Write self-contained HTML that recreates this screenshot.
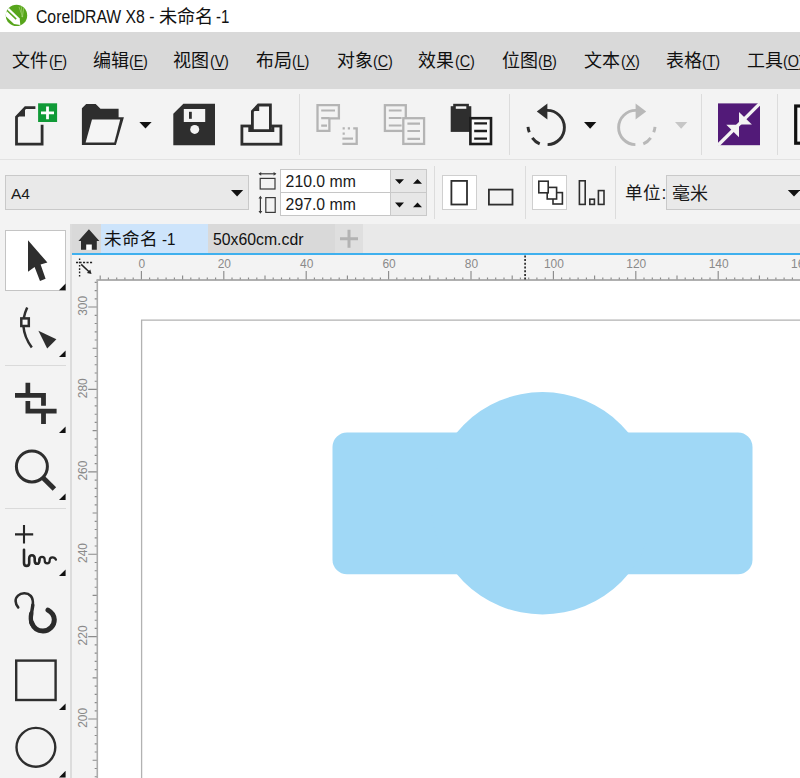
<!DOCTYPE html>
<html lang="zh-CN">
<head>
<meta charset="utf-8">
<title>CorelDRAW X8 - 未命名 -1</title>
<style>
html,body{margin:0;padding:0;width:800px;height:778px;overflow:hidden;background:#fff;}
#app{width:800px;height:778px;overflow:hidden;position:relative;background:#fff;
  font-family:"Liberation Sans",sans-serif;color:#1a1a1a;}
.abs{position:absolute;}
svg{position:absolute;left:0;top:0;overflow:visible;}
/* title bar */
#titlebar{left:0;top:0;width:800px;height:32px;background:#fff;}
#title{left:0;top:4px;width:400px;height:26px;line-height:26px;font-size:17.5px;white-space:nowrap;color:#111;}
#title span{position:absolute;top:0;display:block;transform-origin:0 50%;}
#t1{left:36px;transform:scaleX(.90);}
#t2{left:159.4px;font-size:18.2px;}
#t3{left:216.2px;transform:scaleX(.86);}
/* menu bar */
#menubar{left:0;top:32px;width:800px;height:57px;background:#d9d9d9;}
.mi{position:absolute;top:15px;height:28px;line-height:28px;font-size:18px;white-space:nowrap;color:#111;}
.mi .k{position:absolute;left:36.8px;top:0;display:block;font-size:16.4px;transform:scaleX(.88);transform-origin:0 50%;letter-spacing:-0.2px;}
.mi u{text-decoration:underline;text-underline-offset:1.5px;text-decoration-thickness:1.2px;}
/* standard toolbar */
#toolbar{left:0;top:89px;width:800px;height:70px;background:#f3f3f3;}
.vsep{position:absolute;width:1px;background:#dcdcdc;}
/* property bar */
#propbar{left:0;top:159px;width:800px;height:65px;background:#f3f3f3;box-shadow:inset 0 1px 0 #e2e2e2;}
.combo{position:absolute;box-sizing:border-box;background:#e9e9e9;border:1px solid #c9c9c9;
  font-size:16px;line-height:32px;white-space:nowrap;}
.field{position:absolute;box-sizing:border-box;background:#fff;border:1px solid #c6c6c6;
  font-size:15.8px;white-space:nowrap;}
.spin{position:absolute;box-sizing:border-box;background:#e7e7e7;border:1px solid #c9c9c9;}
.btnon{position:absolute;box-sizing:border-box;background:#fff;border:1px solid #cfcfcf;}
/* doc tabs */
#tabstrip{left:0;top:224px;width:800px;height:31px;background:#e9e9e9;}
#tabline{left:72px;top:253px;width:728px;height:2px;background:#3fb0ee;}
.tab{position:absolute;top:224px;height:29px;line-height:31px;font-size:15.8px;white-space:nowrap;color:#111;}
/* toolbox */
#toolbox{left:0;top:224px;width:72px;height:554px;background:#f3f3f3;border-right:2px solid #dcdcdc;box-sizing:border-box;}
.tsep{position:absolute;left:5px;width:61px;height:1px;background:#dadada;}
/* rulers + canvas */
#hruler{left:72px;top:255px;width:728px;height:25px;background:#f3f3f3;}
#vruler{left:72px;top:255px;width:25px;height:523px;background:#f3f3f3;}
#canvas{left:97px;top:280px;width:703px;height:498px;background:#fff;}
.rl text{font-family:"Liberation Sans",sans-serif;font-size:13px;fill:#8a8a8a;}
</style>
</head>
<body>
<div id="app">

<!-- ===== title bar ===== -->
<div id="titlebar" class="abs"></div>
<svg width="800" height="32" viewBox="0 0 800 32" id="logo">
  <!-- CorelDRAW balloon logo -->
  <defs><clipPath id="lc"><circle cx="16.5" cy="15.4" r="10.7"/></clipPath></defs>
  <circle cx="16.5" cy="15.4" r="10.7" fill="#57a51b"/>
  <g clip-path="url(#lc)">
    <path d="M7.4 6.6L19.7 18.6L20.3 24.9L14 23.9L3 13.6Z" fill="#fff"/>
    <path d="M5.6 9L16.2 19.1" stroke="#57a51b" stroke-width="1.5" fill="none"/>
    <path d="M19 6.8L22.3 16.2M21.2 6L22.4 16M23.8 7.6L22.6 16" stroke="#93c960" stroke-width="0.9" fill="none"/>
    <circle cx="22.3" cy="16.3" r="0.9" fill="#a6d47a"/>
  </g>
</svg>
<div id="title" class="abs"><span id="t1">CorelDRAW X8 -</span><span id="t2">未命名</span><span id="t3">-1</span></div>

<!-- ===== menu bar ===== -->
<div id="menubar" class="abs">
  <div class="mi" style="left:11.8px">文件<span class="k">(<u>F</u>)</span></div>
  <div class="mi" style="left:92.6px">编辑<span class="k">(<u>E</u>)</span></div>
  <div class="mi" style="left:173px">视图<span class="k">(<u>V</u>)</span></div>
  <div class="mi" style="left:255.6px">布局<span class="k">(<u>L</u>)</span></div>
  <div class="mi" style="left:336.6px">对象<span class="k">(<u>C</u>)</span></div>
  <div class="mi" style="left:418px">效果<span class="k">(<u>C</u>)</span></div>
  <div class="mi" style="left:501.6px">位图<span class="k">(<u>B</u>)</span></div>
  <div class="mi" style="left:584px">文本<span class="k">(<u>X</u>)</span></div>
  <div class="mi" style="left:665.6px">表格<span class="k">(<u>T</u>)</span></div>
  <div class="mi" style="left:746.6px">工具<span class="k">(<u>O</u>)</span></div>
</div>

<!-- ===== standard toolbar ===== -->
<div id="toolbar" class="abs">
  <div class="vsep" style="left:299px;top:5px;height:61px"></div>
  <div class="vsep" style="left:509px;top:5px;height:61px"></div>
  <div class="vsep" style="left:701px;top:5px;height:61px"></div>
  <div class="vsep" style="left:777px;top:5px;height:61px"></div>
</div>
<svg width="800" height="778" viewBox="0 0 800 778" id="tbicons">
  <!-- new document -->
  <path d="M35.4 107.6H25.4L16.5 117V144.2H42.1V124.7" fill="none" stroke="#2e2e2e" stroke-width="2.8" stroke-linejoin="miter"/>
  <path d="M17.4 116.4H25V108.6Z" fill="#2e2e2e"/>
  <rect x="38.1" y="103.3" width="19" height="18.7" fill="#109a37"/>
  <path d="M41 112.8H54M47.5 106.4V119.3" stroke="#fff" stroke-width="2.8" fill="none"/>
  <!-- open -->
  <path d="M81.9 108.3L86.2 104H95.7L100.5 108.8H118.6V117.3H123.9L115.9 145H81.9Z" fill="#2e2e2e"/>
  <path d="M92 119.4H120.2L114.3 142.4H85.6Z" fill="#f5f5f5"/>
  <path d="M139.4 122H151.6L145.5 128.5Z" fill="#111"/>
  <!-- save -->
  <path d="M183.4 103.8H215V145.3H173.3V113.8Z" fill="#2e2e2e"/>
  <rect x="183.8" y="109" width="21.4" height="13" fill="#f3f3f3"/>
  <rect x="189" y="111.8" width="2.8" height="7" fill="#2e2e2e"/>
  <circle cx="194.7" cy="129.4" r="4.5" fill="#f3f3f3"/>
  <!-- print -->
  <rect x="241.9" y="126" width="39" height="18.2" fill="#f4f4f4" stroke="#2e2e2e" stroke-width="2.8"/>
  <path d="M249.7 126V130.7H272.9V126" fill="none" stroke="#2e2e2e" stroke-width="2.8"/>
  <path d="M258.4 105H270.4V130.7H252.4V111.2Z" fill="#f6f6f6" stroke="#2e2e2e" stroke-width="2.8"/>
  <path d="M253.2 111H259.2V105.6Z" fill="#2e2e2e"/>
  <!-- cut (disabled) -->
  <g fill="none" stroke="#b4b4b4" stroke-width="2.3">
    <path d="M317.5 105.2H338.9V118.4H329.4V130.9H317.5Z"/>
    <path d="M321.2 110.5H335M321.2 118.2H329.4M321.2 125.6H327" stroke-width="2.2"/>
    <path d="M353.2 128.3H356.7V143.9H342.4"/>
    <path d="M342.4 138.6H353" stroke-width="2.2"/>
  </g>
  <path d="M342.6 127.2H344.8V129.4H342.6ZM347.8 127.2H350V129.4H347.8ZM342.6 132.6H344.8V134.8H342.6Z" fill="#b4b4b4"/>
  <!-- copy (disabled) -->
  <g fill="#f3f3f3" stroke="#b4b4b4" stroke-width="2.3">
    <rect x="384.9" y="105.2" width="20.9" height="25.7"/>
    <path d="M388.8 110.5H401.6M388.8 118H401.6M388.8 125.5H401.6" fill="none" stroke-width="2.2"/>
    <rect x="403.3" y="118.2" width="20.8" height="25.7"/>
    <path d="M407.4 123.6H420M407.4 131H420M407.4 138.8H420" fill="none" stroke-width="2.2"/>
  </g>
  <!-- paste -->
  <rect x="450.7" y="106.2" width="20.6" height="25.7" fill="#2e2e2e"/>
  <rect x="453.2" y="103.8" width="15.7" height="6" fill="#2e2e2e"/>
  <rect x="455.8" y="106.3" width="10.5" height="2.5" fill="#f6f6f6"/>
  <g fill="#f8f8f8" stroke="#1c1c1c" stroke-width="2.6">
    <rect x="470.4" y="118.2" width="20.6" height="25.8"/>
    <path d="M474.2 123.3H487M474.2 131H487M474.2 138.7H487" fill="none" stroke-width="2.3"/>
  </g>
  <!-- undo -->
  <g fill="none" stroke="#2e2e2e" stroke-width="2.9">
    <path d="M547 110.4A17.1 17.1 0 0 1 547.6 144.6"/>
    <path d="M539.7 143.9A18 18 0 0 1 532.3 137.8"/>
    <path d="M529.3 132.3A18.5 18.5 0 0 1 528 126.8"/>
  </g>
  <path d="M536.8 111.5L547.4 103.6V119.4Z" fill="#2e2e2e"/>
  <path d="M584 122H596.3L590.15 128.8Z" fill="#111"/>
  <!-- redo (disabled) -->
  <g fill="none" stroke="#b8b8b8" stroke-width="2.9">
    <path d="M636 110.4A17.1 17.1 0 0 0 635.4 144.6"/>
    <path d="M643.3 143.9A18 18 0 0 0 650.7 137.8"/>
    <path d="M653.7 132.3A18.5 18.5 0 0 0 655 126.8"/>
  </g>
  <path d="M646.2 111.5L635.6 103.6V119.4Z" fill="#b8b8b8"/>
  <path d="M675 122H687.3L681.15 128.8Z" fill="#c6c6c6"/>
  <!-- search content (purple) -->
  <rect x="718" y="103.4" width="42" height="41.8" fill="#521a78"/>
  <path d="M718 145.2L760 103.4" stroke="#f3f3f3" stroke-width="3.4" fill="none"/>
  <path d="M739 111.9V124.6H751.9Z" fill="#f3f3f3"/>
  <path d="M726.3 124.7H739V137.3Z" fill="#f3f3f3"/>
  <!-- clipped next icon -->
  <rect x="795.7" y="106" width="30" height="37.2" fill="#fafafa" stroke="#111" stroke-width="3.2"/>
</svg>

<!-- ===== property bar ===== -->
<div id="propbar" class="abs">
  <div class="combo" style="left:5px;top:16px;width:244px;height:35px;padding-left:5px;font-size:15.5px;line-height:36px">A4</div>
  <div class="field" style="left:280px;top:10px;width:111px;height:24px;line-height:23px;padding-left:4.6px">210.0 mm</div>
  <div class="field" style="left:280px;top:33px;width:111px;height:24px;line-height:23px;padding-left:4.6px">297.0 mm</div>
  <div class="spin" style="left:390px;top:10px;width:37px;height:24px"></div>
  <div class="spin" style="left:390px;top:33px;width:37px;height:24px"></div>
  <div class="vsep" style="left:434px;top:7px;height:53px"></div>
  <div class="btnon" style="left:442px;top:16px;width:35px;height:35px"></div>
  <div class="vsep" style="left:525px;top:7px;height:53px"></div>
  <div class="btnon" style="left:532px;top:16px;width:35px;height:35px"></div>
  <div class="vsep" style="left:615px;top:7px;height:53px"></div>
  <div class="abs" style="left:625.4px;top:16px;height:35px;line-height:37px;font-size:17.6px;white-space:nowrap">单位:</div>
  <div class="combo" style="left:666px;top:16px;width:140px;height:35px;padding-left:5px;font-size:18px;line-height:36px">毫米</div>
</div>
<svg width="800" height="778" viewBox="0 0 800 778" id="pbicons">
  <!-- page size dropdown arrow -->
  <path d="M231 190H243.2L237.1 196.6Z" fill="#111"/>
  <!-- page width / height icons -->
  <g fill="none" stroke="#3a3a3a" stroke-width="1.2">
    <path d="M259.5 173.8H275.5"/>
    <rect x="260.2" y="178.4" width="14.8" height="10.6"/>
    <path d="M260.4 197V212.6"/>
    <rect x="265.8" y="197.6" width="9.4" height="14.8"/>
  </g>
  <path d="M258.4 173.8L261.2 171.9V175.7ZM276.4 173.8L273.6 171.9V175.7ZM260.4 195.8L258.5 198.6H262.3ZM260.4 213.8L258.5 211H262.3Z" fill="#3a3a3a"/>
  <!-- spin arrows -->
  <path d="M395 179.2H404L399.5 184ZM413 183.8H422L417.5 179ZM395 202.6H404L399.5 207.4ZM413 207.2H422L417.5 202.4Z" fill="#111"/>
  <path d="M408.5 170V216" stroke="#dcdcdc" stroke-width="0" fill="none"/>
  <!-- portrait / landscape -->
  <g fill="#fff" stroke="#2e2e2e" stroke-width="1.8">
    <rect x="451.4" y="180.9" width="15.6" height="23.6"/>
    <rect x="488.9" y="189.6" width="23.6" height="15" fill="#f3f3f3"/>
  </g>
  <!-- all pages / current page -->
  <g fill="#fff" stroke="#2e2e2e" stroke-width="1.6">
    <rect x="553" y="192.6" width="9.4" height="11.4"/>
    <rect x="547.2" y="187.4" width="9.4" height="11.6"/>
    <rect x="538.8" y="181.2" width="9.4" height="11.6"/>
  </g>
  <g fill="none" stroke="#2e2e2e" stroke-width="1.6">
    <rect x="579.4" y="180.8" width="5.8" height="23.6"/>
    <rect x="589.8" y="199.2" width="4.6" height="5.2"/>
    <rect x="598.4" y="190.6" width="5.6" height="13.8"/>
  </g>
  <!-- units dropdown arrow -->
  <path d="M787.8 190H800.2L794 196.6Z" fill="#111"/>
</svg>

<!-- ===== document tabs ===== -->
<div id="tabstrip" class="abs"></div>
<div class="tab" style="left:71px;width:30px;background:#d9d9d9"></div>
<div class="tab" style="left:101px;width:107px;background:#cde4fb"><span style="position:absolute;left:3px;font-size:17.6px">未命名</span><span style="position:absolute;left:61.4px;font-size:15.8px;transform:scaleX(.96);transform-origin:0 50%">-1</span></div>
<div class="tab" style="left:208px;width:127px;background:#d9d9d9"><span style="position:absolute;left:5px">50x60cm.cdr</span></div>
<div class="tab" style="left:335px;width:28px;background:#dfdfdf"></div>
<div id="tabline" class="abs"></div>
<svg width="800" height="778" viewBox="0 0 800 778" id="tabicons">
  <!-- welcome screen (home) -->
  <rect x="85.5" y="244" width="7" height="5.8" fill="#fff"/>
  <path d="M88.9 229.2L99.4 241H96.8V249.8H91.8V244.6H86.2V249.8H81V241H78.4Z" fill="#2e2e2e"/>
  <!-- new document tab (+) -->
  <path d="M340 238.8H358M349 229.8V247.8" stroke="#b3b3b3" stroke-width="3" fill="none"/>
</svg>

<!-- ===== rulers and drawing window ===== -->
<div id="hruler" class="abs"></div>
<div id="vruler" class="abs"></div>
<div id="canvas" class="abs"></div>
<svg width="800" height="778" viewBox="0 0 800 778" id="rulers" class="rl">
  <path d="M97.3 778V280" stroke="#acacac" stroke-width="1.6" fill="none"/>
  <path d="M96.5 280H800" stroke="#b0b0b0" stroke-width="2" fill="none"/>
  <path d="M141.6 778V320.1H800" stroke="#b2b2b2" stroke-width="1.3" fill="none"/>
  <path d="M100.2 279.4v-3.9 M108.4 279.4v-1.9 M116.7 279.4v-1.9 M124.9 279.4v-1.9 M133.2 279.4v-1.9 M141.4 279.4v-8.4 M149.6 279.4v-1.9 M157.9 279.4v-1.9 M166.1 279.4v-1.9 M174.4 279.4v-1.9 M182.6 279.4v-3.9 M190.8 279.4v-1.9 M199.1 279.4v-1.9 M207.3 279.4v-1.9 M215.6 279.4v-1.9 M223.8 279.4v-8.4 M232.0 279.4v-1.9 M240.3 279.4v-1.9 M248.5 279.4v-1.9 M256.8 279.4v-1.9 M265.0 279.4v-3.9 M273.2 279.4v-1.9 M281.5 279.4v-1.9 M289.7 279.4v-1.9 M298.0 279.4v-1.9 M306.2 279.4v-8.4 M314.4 279.4v-1.9 M322.7 279.4v-1.9 M330.9 279.4v-1.9 M339.2 279.4v-1.9 M347.4 279.4v-3.9 M355.6 279.4v-1.9 M363.9 279.4v-1.9 M372.1 279.4v-1.9 M380.4 279.4v-1.9 M388.6 279.4v-8.4 M396.8 279.4v-1.9 M405.1 279.4v-1.9 M413.3 279.4v-1.9 M421.6 279.4v-1.9 M429.8 279.4v-3.9 M438.0 279.4v-1.9 M446.3 279.4v-1.9 M454.5 279.4v-1.9 M462.8 279.4v-1.9 M471.0 279.4v-8.4 M479.2 279.4v-1.9 M487.5 279.4v-1.9 M495.7 279.4v-1.9 M504.0 279.4v-1.9 M512.2 279.4v-3.9 M520.4 279.4v-1.9 M528.7 279.4v-1.9 M536.9 279.4v-1.9 M545.2 279.4v-1.9 M553.4 279.4v-8.4 M561.6 279.4v-1.9 M569.9 279.4v-1.9 M578.1 279.4v-1.9 M586.4 279.4v-1.9 M594.6 279.4v-3.9 M602.8 279.4v-1.9 M611.1 279.4v-1.9 M619.3 279.4v-1.9 M627.6 279.4v-1.9 M635.8 279.4v-8.4 M644.0 279.4v-1.9 M652.3 279.4v-1.9 M660.5 279.4v-1.9 M668.8 279.4v-1.9 M677.0 279.4v-3.9 M685.2 279.4v-1.9 M693.5 279.4v-1.9 M701.7 279.4v-1.9 M710.0 279.4v-1.9 M718.2 279.4v-8.4 M726.4 279.4v-1.9 M734.7 279.4v-1.9 M742.9 279.4v-1.9 M751.2 279.4v-1.9 M759.4 279.4v-3.9 M767.6 279.4v-1.9 M775.9 279.4v-1.9 M784.1 279.4v-1.9 M792.4 279.4v-1.9 M800.6 279.4v-8.4" stroke="#8c8c8c" stroke-width="1.15" fill="none"/>
  <path d="M96.8 282.3h-2.1 M96.8 290.6h-2.1 M96.8 298.8h-2.1 M96.8 307.0h-8.6 M96.8 315.3h-2.1 M96.8 323.5h-2.1 M96.8 331.8h-2.1 M96.8 340.0h-2.1 M96.8 348.2h-4.2 M96.8 356.5h-2.1 M96.8 364.7h-2.1 M96.8 373.0h-2.1 M96.8 381.2h-2.1 M96.8 389.4h-8.6 M96.8 397.7h-2.1 M96.8 405.9h-2.1 M96.8 414.2h-2.1 M96.8 422.4h-2.1 M96.8 430.6h-4.2 M96.8 438.9h-2.1 M96.8 447.1h-2.1 M96.8 455.4h-2.1 M96.8 463.6h-2.1 M96.8 471.8h-8.6 M96.8 480.1h-2.1 M96.8 488.3h-2.1 M96.8 496.6h-2.1 M96.8 504.8h-2.1 M96.8 513.0h-4.2 M96.8 521.3h-2.1 M96.8 529.5h-2.1 M96.8 537.8h-2.1 M96.8 546.0h-2.1 M96.8 554.2h-8.6 M96.8 562.5h-2.1 M96.8 570.7h-2.1 M96.8 579.0h-2.1 M96.8 587.2h-2.1 M96.8 595.4h-4.2 M96.8 603.7h-2.1 M96.8 611.9h-2.1 M96.8 620.2h-2.1 M96.8 628.4h-2.1 M96.8 636.6h-8.6 M96.8 644.9h-2.1 M96.8 653.1h-2.1 M96.8 661.4h-2.1 M96.8 669.6h-2.1 M96.8 677.8h-4.2 M96.8 686.1h-2.1 M96.8 694.3h-2.1 M96.8 702.6h-2.1 M96.8 710.8h-2.1 M96.8 719.0h-8.6 M96.8 727.3h-2.1 M96.8 735.5h-2.1 M96.8 743.8h-2.1 M96.8 752.0h-2.1 M96.8 760.2h-4.2 M96.8 768.5h-2.1 M96.8 776.7h-2.1" stroke="#8c8c8c" stroke-width="1.15" fill="none"/>
<text transform="translate(141.9 268) scale(.92 1)" text-anchor="middle">0</text>
<text transform="translate(224.3 268) scale(.92 1)" text-anchor="middle">20</text>
<text transform="translate(306.7 268) scale(.92 1)" text-anchor="middle">40</text>
<text transform="translate(389.1 268) scale(.92 1)" text-anchor="middle">60</text>
<text transform="translate(471.5 268) scale(.92 1)" text-anchor="middle">80</text>
<text transform="translate(553.9 268) scale(.92 1)" text-anchor="middle">100</text>
<text transform="translate(636.3 268) scale(.92 1)" text-anchor="middle">120</text>
<text transform="translate(718.7 268) scale(.92 1)" text-anchor="middle">140</text>
<text transform="translate(801.1 268) scale(.92 1)" text-anchor="middle">160</text>
<text transform="translate(86.6 305.8) rotate(-90) scale(.92 1)" text-anchor="middle">300</text>
<text transform="translate(86.6 388.2) rotate(-90) scale(.92 1)" text-anchor="middle">280</text>
<text transform="translate(86.6 470.6) rotate(-90) scale(.92 1)" text-anchor="middle">260</text>
<text transform="translate(86.6 553.0) rotate(-90) scale(.92 1)" text-anchor="middle">240</text>
<text transform="translate(86.6 635.4) rotate(-90) scale(.92 1)" text-anchor="middle">220</text>
<text transform="translate(86.6 717.8) rotate(-90) scale(.92 1)" text-anchor="middle">200</text>
</svg>

<!-- ===== drawing: rounded rectangle welded with circle ===== -->
<svg width="800" height="778" viewBox="0 0 800 778" id="art">
  <rect x="332.5" y="432.5" width="420" height="141.8" rx="14.5" ry="14.5" fill="#a0d8f6"/>
  <circle cx="542.5" cy="503.3" r="111.2" fill="#a0d8f6"/>
</svg>

<!-- ===== toolbox ===== -->
<div id="toolbox" class="abs">
  <div class="btnon" style="left:5px;top:6px;width:61px;height:61px;border-color:#c4c4c4"></div>
  <div class="tsep" style="top:141px"></div>
  <div class="tsep" style="top:284px"></div>
</div>
<svg width="800" height="778" viewBox="0 0 800 778" id="tools">
  <!-- pick tool -->
  <path d="M28 240.2L47.4 262.6L40.6 264.6L45.6 278.8L40 281L34.6 267L28 271.8Z" fill="#2e2e2e"/>
  <!-- flyout markers -->
  <path d="M65.6 283.6V290.2H59ZM65.6 350.4V357H59ZM65.6 426.4V433H59ZM65.6 493.4V500H59ZM65.6 569.4V576H59ZM65.6 703.4V710H59ZM65.6 770.8V777.4H59Z" fill="#111"/>
  <!-- shape tool -->
  <path d="M27.2 307.4C24.2 314 23 320 23.4 326C24 334 27 341 31.8 347.4" fill="none" stroke="#2e2e2e" stroke-width="2.5"/>
  <rect x="21.3" y="318.4" width="7.5" height="7.6" fill="#fafafa" stroke="#2e2e2e" stroke-width="2.5"/>
  <path d="M38.4 330.8L56.4 339.2L47.2 348.4Z" fill="#2e2e2e"/>
  <!-- crop tool -->
  <path d="M25.5 382.7H30.2V393.1H45.9V405.7H41.1V397.7H15V393.1H25.5ZM25.5 401H30.2V408.8H56.6V413.6H45.9V423.9H41.1V413.6H25.5Z" fill="#2e2e2e"/>
  <!-- zoom tool -->
  <circle cx="31.9" cy="466.4" r="15.5" fill="none" stroke="#2e2e2e" stroke-width="3"/>
  <path d="M43 477.8L54.4 489" stroke="#2e2e2e" stroke-width="5" fill="none"/>
  <!-- freehand tool -->
  <path d="M15 534.4H33.2M24 525V543.4" stroke="#262626" stroke-width="2.1" fill="none"/>
  <path d="M24 549.7V562.9C24 566.8 29.2 566.8 29.2 562.9V558.2C29.2 554.2 34.6 554.2 34.7 558.4V560.6C34.8 564.8 39.4 564.8 39.4 560.8V559.6" fill="none" stroke="#262626" stroke-width="2.6" stroke-linecap="round" stroke-linejoin="round"/>
  <path d="M39.4 560V559.6C39.5 556 44.6 556 44.7 559.6V560.6C44.8 564.2 49.6 564.2 49.7 560.6V560C49.8 556.6 54.6 556.4 56 559.7" fill="none" stroke="#262626" stroke-width="2.2" stroke-linecap="round" stroke-linejoin="round"/>
  <!-- artistic media tool -->
  <g fill="none" stroke="#2b2b2b" stroke-linecap="round" stroke-linejoin="round">
    <path d="M18.2 607.4C15 603.6 14.6 598.6 18 595.6C21.5 592.4 27.5 592.6 30.8 596C33 598.4 33.2 602 32.8 606" stroke-width="2.6"/>
    <path d="M32.8 605C32.4 609 31.6 612 31.2 615" stroke-width="3.4"/>
    <path d="M31.3 613.5C30.6 617 30.6 621 32 624" stroke-width="4.4"/>
    <path d="M31.6 622.5C33.6 628 38 631 43 631C49.5 631 54.4 625.6 54.3 619.6C54.2 615.6 51.6 612.2 48 610.1" stroke-width="5"/>
  </g>
  <!-- rectangle tool -->
  <rect x="16.2" y="660.6" width="39.4" height="39.4" fill="none" stroke="#2e2e2e" stroke-width="2.4"/>
  <!-- ellipse tool -->
  <circle cx="35.9" cy="747.3" r="19.4" fill="none" stroke="#2e2e2e" stroke-width="2.4"/>
  <!-- ruler origin -->
  <g fill="none" stroke="#222" stroke-width="1.4">
    <path d="M76 262.5H93.4" stroke-dasharray="2.1 1.4"/>
    <path d="M79.6 258.4V276.4" stroke-dasharray="1.6 1.7"/>
    <path d="M81.2 264.4L89.6 272.3" stroke-width="1.5"/>
  </g>
  <path d="M91.5 274.1L86.9 272.9L90.3 269.5Z" fill="#222"/>
  <!-- pointer position marker on ruler -->
  <path d="M525.1 255.4V280" stroke="#333" stroke-width="1.8" stroke-dasharray="2 1.7" fill="none"/>
</svg>

</div>
</body>
</html>
